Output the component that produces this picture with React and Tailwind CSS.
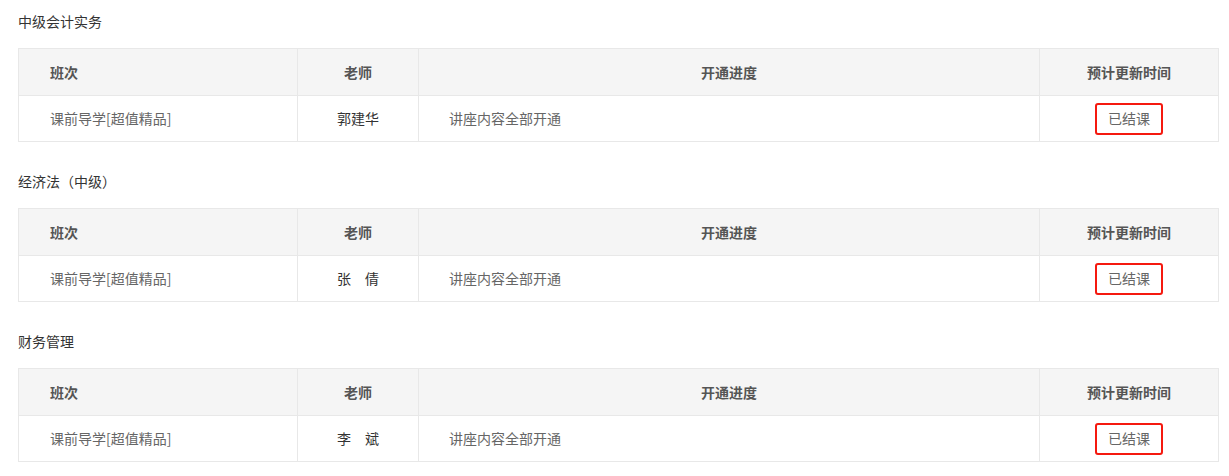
const sections = [
  { title: '中级会计实务', teacher: '郭建华' },
  { title: '经济法（中级）', teacher: '张　倩' },
  { title: '财务管理', teacher: '李　斌' },
];

const Section = ({ title, teacher }) => (
  <div className="mb-[18px]">
    <div className="h-[48px] leading-[42px] text-[14px] text-[#333]">{title}</div>
    <table className="w-[1200px] border-collapse table-fixed text-[14px]">
      <colgroup>
        <col className="w-[279px]" />
        <col className="w-[121px]" />
        <col className="w-[621px]" />
        <col className="w-[179px]" />
      </colgroup>
      <thead>
        <tr className="h-[47px] bg-[#f5f5f5] text-[#555] font-bold">
          <th className="border border-[#e8e8e8] text-left pl-[31px] font-bold">班次</th>
          <th className="border border-[#e8e8e8] text-center font-bold">老师</th>
          <th className="border border-[#e8e8e8] text-center font-bold">开通进度</th>
          <th className="border border-[#e8e8e8] text-center font-bold">预计更新时间</th>
        </tr>
      </thead>
      <tbody>
        <tr className="h-[46px] text-[#666]">
          <td className="border border-[#e8e8e8] pl-[31px]">课前导学[超值精品]</td>
          <td className="border border-[#e8e8e8] text-center text-[#333]">{teacher}</td>
          <td className="border border-[#e8e8e8] pl-[30px]">讲座内容全部开通</td>
          <td className="border border-[#e8e8e8] text-center">
            <span className="inline-flex items-center justify-center w-[68px] h-[32px] border-2 border-[#f5190f] rounded-[3px]">已结课</span>
          </td>
        </tr>
      </tbody>
    </table>
  </div>
);

export default function App() {
  return (
    <div className="w-[1229px] h-[476px] bg-white pl-[18px] overflow-hidden" style={{ fontFamily: '"Microsoft YaHei", "Noto Sans CJK SC", sans-serif' }}>
      {sections.map((s) => (
        <Section key={s.title} {...s} />
      ))}
    </div>
  );
}
